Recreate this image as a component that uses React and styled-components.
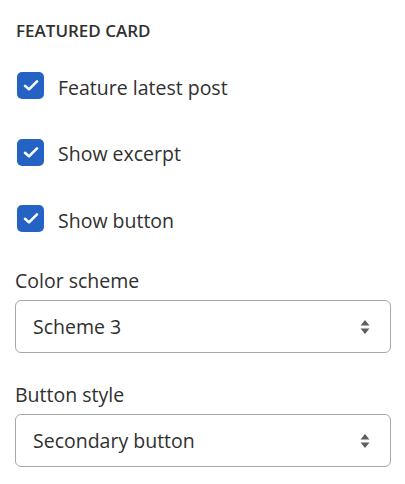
import React from 'react';
import styled, { createGlobalStyle } from 'styled-components';

const GlobalStyle = createGlobalStyle`
  body {
    margin: 0;
    background: #ffffff;
    font-family: "Open Sans", "Noto Sans", sans-serif;
    color: #303030;
  }
`;

const Panel = styled.div`
  display: flex;
  flex-direction: column;
  padding: 21px 14px 0 15px;
  width: 405px;
  box-sizing: border-box;
`;

const Heading = styled.h2`
  margin: 0 0 31px 1px;
  font-size: 17px;
  line-height: 20px;
  font-weight: 600;
  color: #303030;
`;

const CheckList = styled.div`
  display: flex;
  flex-direction: column;
  gap: 39.5px;
  margin-bottom: 37px;
`;

const CheckRow = styled.label`
  display: flex;
  align-items: center;
  gap: 14px;
  padding-left: 2px;
  height: 27px;
  font-size: 19.5px;
  color: #303030;
`;

const CheckText = styled.span`
  padding-top: 3px;
`;

const Box = styled.span`
  width: 27px;
  height: 27px;
  border-radius: 5px;
  background: ${(p) => (p.checked ? '#2463c4' : '#fff')};
  display: flex;
  align-items: center;
  justify-content: center;
  flex-shrink: 0;
`;

const Field = styled.div`
  display: flex;
  flex-direction: column;
  gap: 7px;
  margin-bottom: 30px;
`;

const FieldLabel = styled.div`
  font-size: 19.5px;
  line-height: 24px;
  color: #303030;
`;

const Select = styled.div`
  display: flex;
  align-items: center;
  justify-content: space-between;
  height: 53px;
  box-sizing: border-box;
  border: 1px solid #a4a7ad;
  border-radius: 6px;
  padding: 0 20px 0 17px;
  font-size: 19.5px;
  color: #303030;
`;

const Checkbox = ({ label, checked = true }) => (
  <CheckRow>
    <Box checked={checked}>
      <svg width="16" height="13" viewBox="0 0 16 13" fill="none">
        <path d="M2 6.8 L6 10.4 L14 2.4" stroke="#fff" strokeWidth="2.6" strokeLinecap="round" strokeLinejoin="round" />
      </svg>
    </Box>
    <CheckText>{label}</CheckText>
  </CheckRow>
);

const Arrows = () => (
  <svg width="10" height="16" viewBox="0 0 10 16">
    <path d="M5 1 L9.5 6.5 H0.5 Z" fill="#5c5f62" />
    <path d="M5 15 L9.5 9.5 H0.5 Z" fill="#5c5f62" />
  </svg>
);

const SelectField = ({ label, value }) => (
  <Field>
    <FieldLabel>{label}</FieldLabel>
    <Select>
      <span>{value}</span>
      <Arrows />
    </Select>
  </Field>
);

export default function App() {
  return (
    <>
      <GlobalStyle />
      <Panel>
        <Heading>FEATURED CARD</Heading>
        <CheckList>
          <Checkbox label="Feature latest post" />
          <Checkbox label="Show excerpt" />
          <Checkbox label="Show button" />
        </CheckList>
        <SelectField label="Color scheme" value="Scheme 3" />
        <SelectField label="Button style" value="Secondary button" />
      </Panel>
    </>
  );
}
